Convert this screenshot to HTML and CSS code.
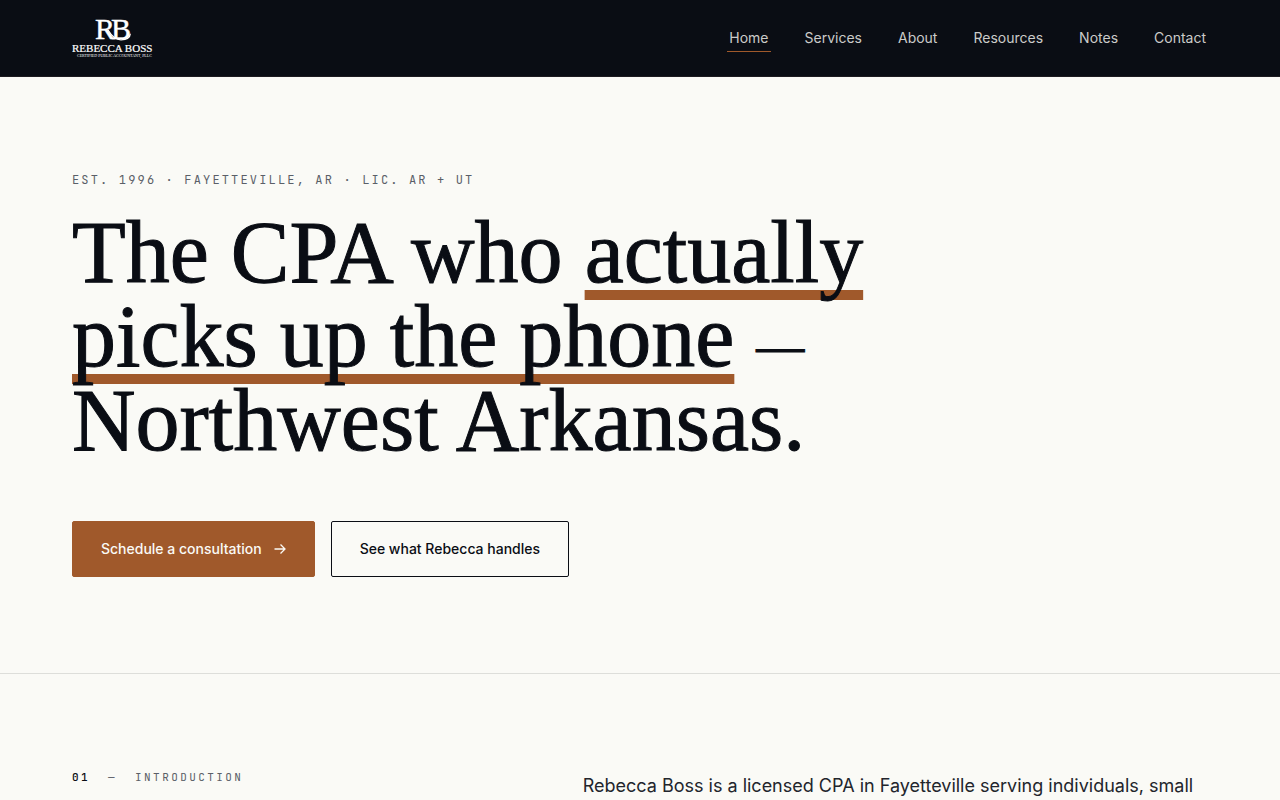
FILE: index.html
```html
<!DOCTYPE html>
<html lang="en">
<head>
<meta charset="utf-8">
<meta name="viewport" content="width=device-width, initial-scale=1">
<title>Rebecca Boss, CPA</title>
<link rel="stylesheet" href="styles.css">
</head>
<body>
<header class="site-header">
  <a class="logo" href="#" aria-label="Rebecca Boss, home">
    <svg class="logo-mark" viewBox="0 0 84 42" width="84" height="42" fill="#fff" font-family="Liberation Serif, serif">
      <text x="23" y="22" font-size="30" stroke="#fff" stroke-width=".4">R</text>
      <text x="39" y="22" font-size="30" stroke="#fff" stroke-width=".4">B</text>
      <path d="M36 13c3 5 7 9.800 13 9.800c5 0 9-2 9.300-6" fill="none" stroke="#fff" stroke-width="1.300"/>
      <text x="0" y="35" font-size="11" stroke="#fff" stroke-width=".2">REBECCA BOSS</text>
      <text x="5" y="40" font-size="4">CERTIFIED PUBLIC ACCOUNTANT, PLLC</text>
    </svg>
  </a>
  <nav class="nav" aria-label="Main">
    <a class="nav-link nav-link-active" href="#" aria-current="page">Home</a>
    <a class="nav-link" href="#">Services</a>
    <a class="nav-link" href="#">About</a>
    <a class="nav-link" href="#">Resources</a>
    <a class="nav-link" href="#">Notes</a>
    <a class="nav-link" href="#">Contact</a>
  </nav>
</header>
<main>
  <section class="hero">
    <p class="eyebrow">EST. 1996 · FAYETTEVILLE, AR · LIC. AR + UT</p>
    <h1 class="headline">The CPA who <span class="marked">actually picks up the phone</span> <span class="dash">—</span> Northwest Arkansas.</h1>
    <div class="actions">
      <a class="button button-primary" href="#">Schedule a consultation
        <svg width="12" height="12" viewBox="0 0 12 12" fill="none" stroke="currentColor" stroke-width="1.300" aria-hidden="true"><path d="M.5 6h10.500M6.500 1.500L11 6l-4.500 4.500"/></svg>
      </a>
      <a class="button" href="#">See what Rebecca handles</a>
    </div>
  </section>
  <section class="intro">
    <h2 class="section-label"><span class="section-number">01</span><span>—</span><span>INTRODUCTION</span></h2>
    <p class="intro-text">Rebecca Boss is a licensed CPA in Fayetteville serving individuals, small</p>
  </section>
</main>
</body>
</html>
```

FILE: styles.css
```css
* {
  box-sizing: border-box;
}

body {
  margin: 0;
  background: #fafaf6;
  color: #0a0d14;
  font-family: Inter, "Liberation Sans", sans-serif;
}

.site-header {
  display: flex;
  align-items: center;
  justify-content: space-between;
  padding: 17px 72px;
  border-bottom: 1px solid #1d1b20;
  background: #0a0d14;
}

.logo,
.logo-mark {
  display: block;
}

.nav {
  display: flex;
  gap: 32px;
}

.nav-link {
  padding: 4px 2px;
  border-bottom: 1px solid transparent;
  color: #cbcbc9;
  font-size: 14px;
  line-height: 18px;
  text-decoration: none;
}

.nav-link-active {
  border-color: #a0592b;
}

.hero {
  padding: 96px 72px;
  border-bottom: 1px solid #dddeda;
}

.eyebrow {
  margin: 0 0 24px;
  color: #5a5f68;
  font-family: "JetBrains Mono", "Liberation Mono", monospace;
  font-size: 12px;
  font-weight: 400;
  line-height: 14px;
  letter-spacing: 0.18em;
}

.headline {
  max-width: 880px;
  margin: 0 0 58px;
  font-family: "Liberation Serif", serif;
  font-size: 88px;
  font-weight: 400;
  line-height: 84px;
  -webkit-text-stroke: 1px currentColor;
}

.marked {
  text-decoration: underline #a0592b 10px;
  text-decoration-skip-ink: none;
  text-underline-offset: 8px;
}

.dash {
  font-size: 48px;
  line-height: 1;
  vertical-align: middle;
}

.actions {
  display: flex;
  flex-wrap: wrap;
  gap: 16px;
}

.button {
  display: inline-flex;
  align-items: center;
  gap: 12px;
  padding: 16px 28px;
  border: 1px solid #0a0d14;
  border-radius: 2px;
  color: #0a0d14;
  font-size: 14px;
  font-weight: 500;
  line-height: 22px;
  text-decoration: none;
}

.button-primary {
  border-color: #a0592b;
  background: #a0592b;
  color: #fafaf6;
}

.intro {
  display: grid;
  grid-template-columns: 5fr 7fr;
  gap: 64px;
  padding: 96px 72px;
}

.section-label {
  display: flex;
  gap: 18px;
  margin: 0;
  color: #5a5f68;
  font-family: "JetBrains Mono", "Liberation Mono", monospace;
  font-size: 11px;
  font-weight: 400;
  line-height: 14px;
  letter-spacing: 0.22em;
}

.section-number {
  color: #0a0d14;
  font-weight: 500;
}

.intro-text {
  margin: 0;
  color: #22252c;
  font-size: 18px;
  line-height: 32px;
}
```
